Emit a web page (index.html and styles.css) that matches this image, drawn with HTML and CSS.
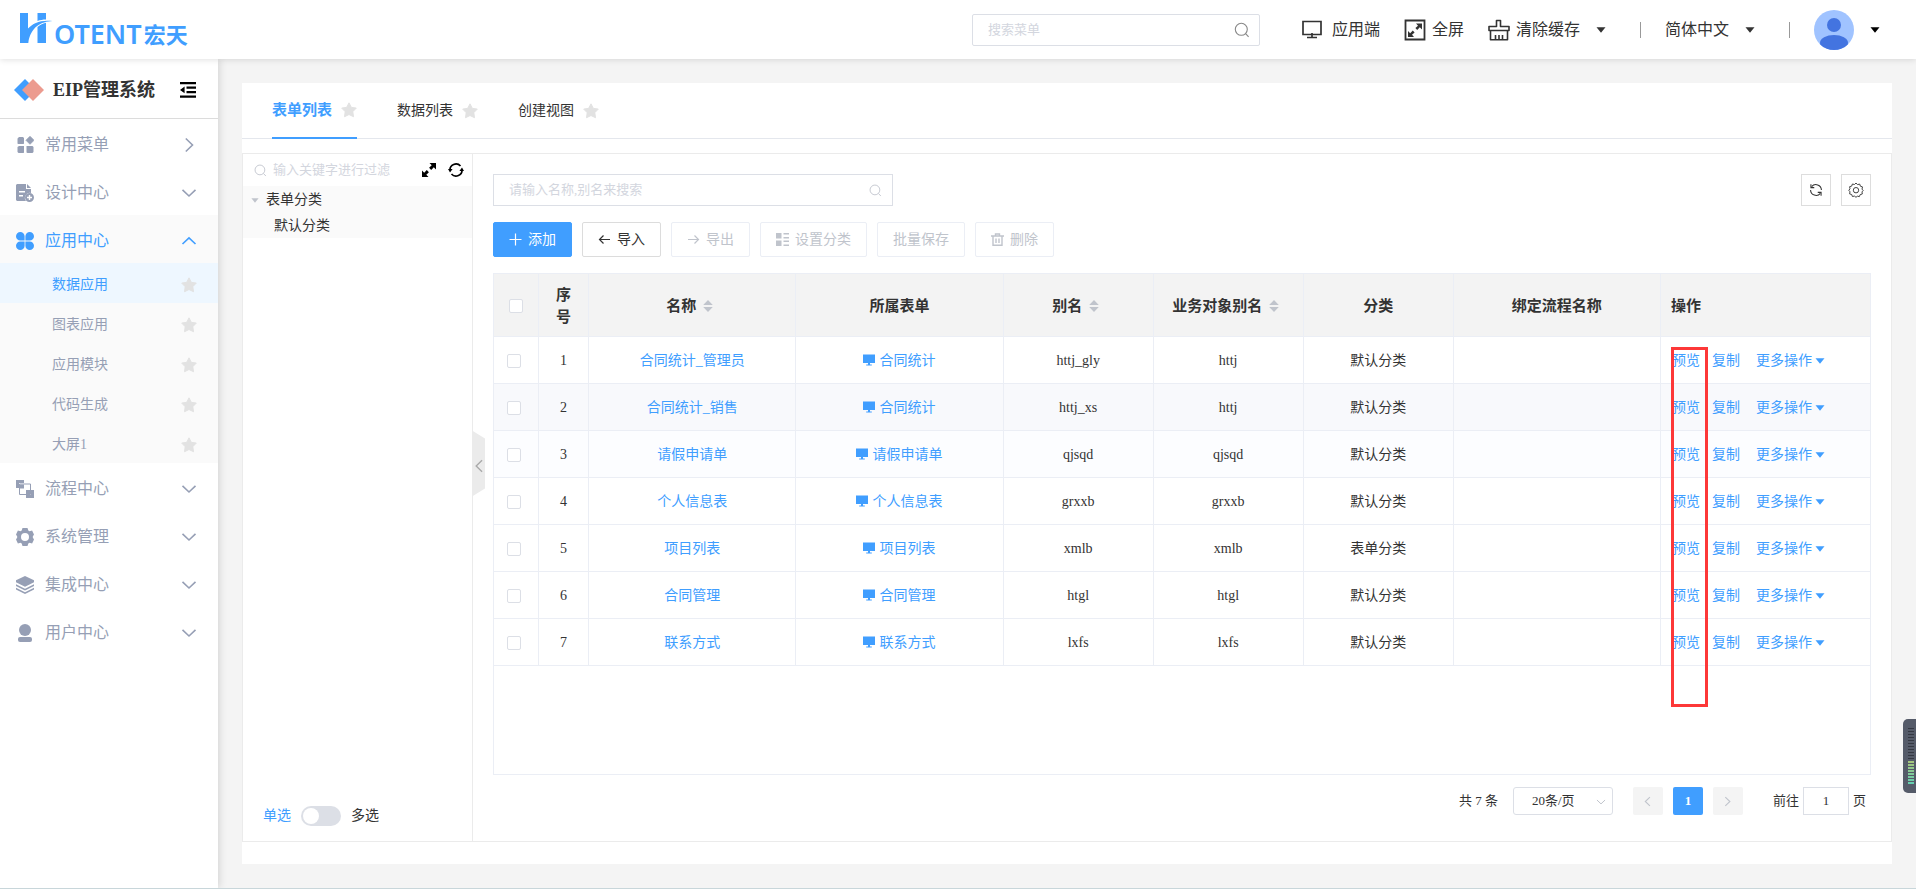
FILE: index.html
```html
<!DOCTYPE html>
<html lang="zh-CN">
<head>
  <meta charset="UTF-8">
  <meta name="viewport" content="width=device-width, initial-scale=1.0">
  <title>EIP管理系统</title>
  <link rel="stylesheet" href="styles.css">
</head>
<body>

<!-- icons -->
<svg class="sprite" aria-hidden="true">
  <symbol id="i-search" viewBox="0 0 16 16"><circle cx="7.3" cy="7.3" r="6" fill="none" stroke="currentColor" stroke-width="1.1"/><path d="M11.6 11.6L14.6 14.8" stroke="currentColor" stroke-width="1.1"/></symbol>
  <symbol id="i-star" viewBox="0 0 16 16"><path d="M8 .8l2.3 4.5 5 .8-3.5 3.6.7 5L8 12.5l-4.5 2.2.7-5L.7 6.1l5-.8z" fill="currentColor" stroke="currentColor" stroke-linejoin="round"/></symbol>
  <symbol id="i-down" viewBox="0 0 16 16"><path d="M1.5 4.8L8 11l6.500-6.200" fill="none" stroke="currentColor" stroke-width="1.6"/></symbol>
  <symbol id="i-up" viewBox="0 0 16 16"><path d="M1.500 11L8 4.800l6.500 6.200" fill="none" stroke="currentColor" stroke-width="1.6"/></symbol>
  <symbol id="i-right" viewBox="0 0 16 16"><path d="M4.800 1.500L11.500 8l-6.700 6.500" fill="none" stroke="currentColor" stroke-width="1.6"/></symbol>
  <symbol id="i-left" viewBox="0 0 16 16"><path d="M11.500 1.500L4.800 8l6.700 6.500" fill="none" stroke="currentColor" stroke-width="1.6"/></symbol>
  <symbol id="i-caret" viewBox="0 0 10 6"><path d="M.5.300h9L5 5.800z" fill="currentColor"/></symbol>
  <symbol id="i-screen" viewBox="0 0 12 12"><path d="M0 .5h12v8.500H0zM5 9h2v1.600h1.800v.9H3.200v-.9H5z" fill="currentColor"/></symbol>
  <symbol id="i-sort" viewBox="0 0 10 14"><path d="M5 1l4.800 5H.2zM5 13l4.800-5H.2z" fill="#c0c4cc"/></symbol>
  <symbol id="i-refresh" viewBox="0 0 16 16"><path d="M3 4.200A6.300 6.300 0 0 1 14.200 8M13 11.800A6.300 6.300 0 0 1 1.800 8" fill="none" stroke="currentColor" stroke-width="1.200"/><path d="M2.200 1.500v3.800H6M13.800 14.500v-3.800H10" fill="none" stroke="currentColor" stroke-width="1.200"/></symbol>
</svg>

<header class="header">
  <a class="logo" href="#" aria-label="HOTENT宏天">
    <svg class="logo-mark" viewBox="0 0 34 31"><path d="M0 0h8v15.500C13 10 21 6.500 32.500 8 21 8.500 10.500 14 8.300 30H0zM17.500 0H26v6.500c-3 0-6 .5-8.500 1.500zM17.500 14c2-1.800 5-3.500 8.500-4.200V30h-8.500z" fill="#409eff"/></svg>
    <span class="logo-en">OTENT</span><span class="logo-cn">宏天</span>
  </a>
  <div class="top-search">
    <input type="text" placeholder="搜索菜单" aria-label="搜索菜单">
    <svg width="16" height="16"><use href="#i-search"/></svg>
  </div>
  <nav class="top-nav">
    <button class="top-btn app-btn">
      <svg width="20" height="20" viewBox="0 0 20 20"><path d="M1 1.500h18v13H1zM10 13v4M5 17.500h10" fill="none" stroke="#333" stroke-width="1.700"/></svg>
      应用端
    </button>
    <button class="top-btn">
      <svg width="22" height="22" viewBox="0 0 22 22"><path d="M1.500 1.500h19v19h-19z" fill="none" stroke="#333" stroke-width="1.800"/><path d="M12 4.500h6v6l-2.200-2.200-2.600 2.600-1.800-1.800L14 6.700zM10 18H4v-6l2.200 2.200 2.600-2.600 1.800 1.800L8 15.800z" fill="#333"/></svg>
      全屏
    </button>
    <button class="top-btn clear-btn">
      <svg width="22" height="22" viewBox="0 0 22 22"><path d="M1 11.500V7.500h7.500V1.500h4v6H21v4zM2.500 11.500v9.300h17v-9.300M7.500 20.500V16M11 20.500V16M14.500 20.500V16" fill="none" stroke="#333" stroke-width="1.600" stroke-linejoin="round"/></svg>
      清除缓存
      <svg class="caret" width="10" height="6"><use href="#i-caret"/></svg>
    </button>
    <i class="divider"></i>
    <button class="top-btn">
      简体中文
      <svg class="caret" width="10" height="6"><use href="#i-caret"/></svg>
    </button>
    <i class="divider"></i>
    <button class="top-btn user-btn" aria-label="用户">
      <svg width="40" height="40" viewBox="0 0 40 40"><clipPath id="av"><circle cx="20" cy="20" r="20"/></clipPath><g clip-path="url(#av)"><path d="M0 0h40v40H0z" fill="#a0c3ff"/><circle cx="20" cy="15" r="7" fill="#4374e0"/><ellipse cx="20" cy="33" rx="14" ry="8" fill="#4374e0"/></g></svg>
      <svg class="caret" width="10" height="6"><use href="#i-caret"/></svg>
    </button>
  </nav>
</header>

<div class="layout">
  <aside class="sidebar">
    <div class="system">
      <svg width="30" height="22" viewBox="0 0 30 22"><path d="M11 0l11 11-11 11L0 11z" fill="#409eff"/><path d="M19 0l11 11-11 11L8 11z" fill="#ec9b8f"/></svg>
      <strong>EIP管理系统</strong>
      <button class="fold" aria-label="收起菜单">
        <svg width="16" height="16" viewBox="0 0 16 16"><path d="M0 0h16v2.300H0zM6.500 4.500H16v2.300H6.500zM6.500 9H16v2.300H6.500zM0 13.500h16v2.300H0zM0 7.900l4.600-3.400v6.800z"/></svg>
      </button>
    </div>
    <ul class="menu">
      <li><a href="#">
        <svg class="ico" viewBox="0 0 18 18"><path d="M3 1h4l1 1v5.500l-.5.500H2l-.500-.5V2.500zM3 10h5v6.500l-.5.500H2.500l-1-1v-5zM10.500 10h6l1 1v5l-1 1h-5l-1-.5z"/><path d="M14 .3l4 4-4 4-4-4z" stroke="#969fb5" stroke-linejoin="round" stroke-width=".8"/></svg>
        <span>常用菜单</span><svg class="arrow"><use href="#i-right"/></svg></a></li>
      <li><a href="#">
        <svg class="ico" viewBox="0 0 18 18"><path fill-rule="evenodd" d="M1 0h9v5h5v4a5 5 0 0 0-5 8H1l-1-1V1zM3 7v1.500h6V7zm0 4v1.500h4V11zM11 0l4 4h-4z"/><path fill-rule="evenodd" d="M13.500 9a4.500 4.500 0 1 1 0 9 4.500 4.500 0 0 1 0-9zm-.7 2v1.800H11v1.400h1.800V16h1.400v-1.800H16v-1.400h-1.800V11z"/></svg>
        <span>设计中心</span><svg class="arrow"><use href="#i-down"/></svg></a></li>
      <li class="open"><a href="#">
        <svg class="ico" viewBox="0 0 18 18"><path d="M4.300 0a4.300 4.300 0 0 1 4.300 4.300v4.300H4.300a4.300 4.300 0 0 1 0-8.600zM13.700 0a4.300 4.300 0 0 1 0 8.600H9.400V4.300A4.300 4.300 0 0 1 13.700 0zM4.300 9.400h4.300v4.300a4.300 4.300 0 1 1-4.300-4.300zM9.400 9.400h4.300a4.300 4.300 0 1 1-4.300 4.300z"/></svg>
        <span>应用中心</span><svg class="arrow"><use href="#i-up"/></svg></a>
        <ul class="submenu">
          <li class="active"><a href="#">数据应用<svg class="star"><use href="#i-star"/></svg></a></li>
          <li><a href="#">图表应用<svg class="star"><use href="#i-star"/></svg></a></li>
          <li><a href="#">应用模块<svg class="star"><use href="#i-star"/></svg></a></li>
          <li><a href="#">代码生成<svg class="star"><use href="#i-star"/></svg></a></li>
          <li><a href="#">大屏1<svg class="star"><use href="#i-star"/></svg></a></li>
        </ul>
      </li>
      <li><a href="#">
        <svg class="ico" viewBox="0 0 18 18"><path d="M0 0h8v3H3v5H0zM4 4.500h4v4H4zM10 10h4v4h-4zM15 10h3v8h-8v-3h5z"/><path d="M3.500 4h11v10.500h-11z" fill="none" stroke="#969fb5"/></svg>
        <span>流程中心</span><svg class="arrow"><use href="#i-down"/></svg></a></li>
      <li><a href="#">
        <svg class="ico" viewBox="0 0 18 18"><path fill-rule="evenodd" d="M6.500 0h5l.8 2.500 1.200.7 2.600-.6L18 6.500l-1.200 2v1l1.200 2-1.900 3.900-2.600-.6-1.200.7-.8 2.500h-5l-.8-2.500-1.200-.7-2.600.6L0 11.500l1.200-2v-1L0 6.500l1.900-3.900 2.600.6 1.200-.7zM9 5a4 4 0 1 0 0 8 4 4 0 0 0 0-8z"/></svg>
        <span>系统管理</span><svg class="arrow"><use href="#i-down"/></svg></a></li>
      <li><a href="#">
        <svg class="ico" viewBox="0 0 18 18"><path d="M9 0l9 4.300v2L9 10.800 0 6.300v-2zM0 8.300l9 4.500 9-4.500v1.700l-9 4.500L0 10zM0 11.700l9 4.500 9-4.500v1.700L9 18l-9-4.600z"/></svg>
        <span>集成中心</span><svg class="arrow"><use href="#i-down"/></svg></a></li>
      <li><a href="#">
        <svg class="ico" viewBox="0 0 18 18"><circle cx="9" cy="6" r="6"/><rect x="2" y="13" width="14" height="5" rx="2"/></svg>
        <span>用户中心</span><svg class="arrow"><use href="#i-down"/></svg></a></li>
    </ul>
  </aside>

  <main class="main">
    <div class="card">
      <nav class="tabs">
        <a class="tab current" href="#">表单列表<svg class="star"><use href="#i-star"/></svg></a>
        <a class="tab" href="#">数据列表<svg class="star"><use href="#i-star"/></svg></a>
        <a class="tab" href="#">创建视图<svg class="star"><use href="#i-star"/></svg></a>
      </nav>

      <div class="content">
        <section class="tree">
          <div class="tree-search">
            <svg class="muted" width="13" height="13"><use href="#i-search"/></svg>
            <input type="text" placeholder="输入关键字进行过滤" aria-label="输入关键字进行过滤">
            <button aria-label="展开"><svg width="14" height="14" viewBox="0 0 14 14"><path d="M7.500 0H14v6.500l-2.200-2.200-2.600 2.600-2.100-2.100 2.600-2.600zM6.500 14H0V7.500l2.200 2.200 2.600-2.600 2.100 2.100-2.600 2.600z"/></svg></button>
            <button aria-label="刷新"><svg width="16" height="16" viewBox="0 0 16 16"><path d="M2 8.500A6 6 0 0 1 12.500 4M14 7.500A6 6 0 0 1 3.500 12" fill="none" stroke="#000" stroke-width="1.700"/><path d="M0 7h4.600L2 10.400zM16 9h-4.600L14 5.600z"/></svg></button>
          </div>
          <ul class="nodes">
            <li><svg class="caret" width="8" height="5"><use href="#i-caret"/></svg>表单分类</li>
            <li class="child">默认分类</li>
          </ul>
          <div class="mode">
            <label class="on" for="mode">单选</label>
            <input type="checkbox" id="mode" class="switch">
            <label for="mode">多选</label>
          </div>
          <button class="handle" aria-label="收起"><svg width="14" height="14"><use href="#i-left"/></svg></button>
        </section>

        <section class="list">
          <div class="list-top">
            <div class="query">
              <input type="text" placeholder="请输入名称,别名来搜索" aria-label="请输入名称,别名来搜索">
              <svg class="muted" width="13" height="13"><use href="#i-search"/></svg>
            </div>
            <div class="tools">
              <button aria-label="刷新"><svg width="14" height="14"><use href="#i-refresh"/></svg></button>
              <button aria-label="设置"><svg width="16" height="16" viewBox="0 0 16 16"><path d="M8 1l1.500 1.600 2.200-.5.700 2.100 2.100.7-.5 2.200L15.200 8.500 14 9.900l.3 2.100-2.100.6-.8 2-2.100-.4L8 15.300l-1.500-1.200-2.100.4-.7-2-2.100-.6.400-2.100L.8 8.300 2 6.800l-.4-2.100 2.100-.6.700-2.100 2.100.5z" fill="none" stroke="#444"/><circle cx="8" cy="8.200" r="2.700" fill="none" stroke="#444"/></svg></button>
            </div>
          </div>

          <div class="actions">
            <button class="btn primary"><svg width="13" height="13" viewBox="0 0 13 13"><path d="M6.500.500v12M.5 6.500h12" stroke="#fff" stroke-width="1.200"/></svg>添加</button>
            <button class="btn"><svg width="13" height="13" viewBox="0 0 13 13"><path d="M12 6.500H1.500M5.500 2.500l-4 4 4 4" fill="none" stroke="#333" stroke-width="1.200"/></svg>导入</button>
            <button class="btn" disabled><svg width="13" height="13" viewBox="0 0 13 13"><path d="M1 6.500h10.500M7.500 2.500l4 4-4 4" fill="none" stroke="#c0c4cc" stroke-width="1.200"/></svg>导出</button>
            <button class="btn" disabled><svg width="13" height="13" viewBox="0 0 13 13"><path d="M0 0h5.500v5.500H0zM0 7.500h5.500V13H0zM7.500 0H13v1.500H7.500zM7.500 4H13v1.500H7.500zM7.500 7.500H13V9H7.500zM7.500 11.500H13V13H7.500z" fill="#c0c4cc"/></svg>设置分类</button>
            <button class="btn" disabled>批量保存</button>
            <button class="btn" disabled><svg width="13" height="13" viewBox="0 0 13 13"><path d="M0 3h13M4.500 2.500V1h4v1.500M2 3v9.300h9V3M5 5.500v4.500M8 5.500v4.500" fill="none" stroke="#c0c4cc" stroke-width="1.400"/></svg>删除</button>
          </div>

          <div class="table-box">
            <table>
              <colgroup>
                <col class="c-check"><col class="c-index"><col><col><col class="c-mid"><col class="c-mid"><col class="c-mid"><col><col class="c-ops">
              </colgroup>
              <thead>
                <tr>
                  <th class="check-all"><input type="checkbox" aria-label="全选"></th>
                  <th>序号</th>
                  <th>名称<svg class="sort"><use href="#i-sort"/></svg></th>
                  <th>所属表单</th>
                  <th>别名<svg class="sort"><use href="#i-sort"/></svg></th>
                  <th>业务对象别名<svg class="sort"><use href="#i-sort"/></svg></th>
                  <th>分类</th>
                  <th>绑定流程名称</th>
                  <th class="ops">操作</th>
                </tr>
              </thead>
              <tbody>
                <tr>
                  <td><input type="checkbox" aria-label="选择1"></td><td>1</td>
                  <td><a href="#">合同统计_管理员</a></td>
                  <td><a href="#"><svg class="screen"><use href="#i-screen"/></svg>合同统计</a></td>
                  <td>httj_gly</td><td>httj</td><td>默认分类</td><td></td>
                  <td class="ops"><a href="#">预览</a><a href="#">复制</a><a class="more" href="#">更多操作<svg><use href="#i-caret"/></svg></a></td>
                </tr>
                <tr class="striped">
                  <td><input type="checkbox" aria-label="选择2"></td><td>2</td>
                  <td><a href="#">合同统计_销售</a></td>
                  <td><a href="#"><svg class="screen"><use href="#i-screen"/></svg>合同统计</a></td>
                  <td>httj_xs</td><td>httj</td><td>默认分类</td><td></td>
                  <td class="ops"><a href="#">预览</a><a href="#">复制</a><a class="more" href="#">更多操作<svg><use href="#i-caret"/></svg></a></td>
                </tr>
                <tr class="tinted">
                  <td><input type="checkbox" aria-label="选择3"></td><td>3</td>
                  <td><a href="#">请假申请单</a></td>
                  <td><a href="#"><svg class="screen"><use href="#i-screen"/></svg>请假申请单</a></td>
                  <td>qjsqd</td><td>qjsqd</td><td>默认分类</td><td></td>
                  <td class="ops"><a href="#">预览</a><a href="#">复制</a><a class="more" href="#">更多操作<svg><use href="#i-caret"/></svg></a></td>
                </tr>
                <tr>
                  <td><input type="checkbox" aria-label="选择4"></td><td>4</td>
                  <td><a href="#">个人信息表</a></td>
                  <td><a href="#"><svg class="screen"><use href="#i-screen"/></svg>个人信息表</a></td>
                  <td>grxxb</td><td>grxxb</td><td>默认分类</td><td></td>
                  <td class="ops"><a href="#">预览</a><a href="#">复制</a><a class="more" href="#">更多操作<svg><use href="#i-caret"/></svg></a></td>
                </tr>
                <tr>
                  <td><input type="checkbox" aria-label="选择5"></td><td>5</td>
                  <td><a href="#">项目列表</a></td>
                  <td><a href="#"><svg class="screen"><use href="#i-screen"/></svg>项目列表</a></td>
                  <td>xmlb</td><td>xmlb</td><td>表单分类</td><td></td>
                  <td class="ops"><a href="#">预览</a><a href="#">复制</a><a class="more" href="#">更多操作<svg><use href="#i-caret"/></svg></a></td>
                </tr>
                <tr>
                  <td><input type="checkbox" aria-label="选择6"></td><td>6</td>
                  <td><a href="#">合同管理</a></td>
                  <td><a href="#"><svg class="screen"><use href="#i-screen"/></svg>合同管理</a></td>
                  <td>htgl</td><td>htgl</td><td>默认分类</td><td></td>
                  <td class="ops"><a href="#">预览</a><a href="#">复制</a><a class="more" href="#">更多操作<svg><use href="#i-caret"/></svg></a></td>
                </tr>
                <tr>
                  <td><input type="checkbox" aria-label="选择7"></td><td>7</td>
                  <td><a href="#">联系方式</a></td>
                  <td><a href="#"><svg class="screen"><use href="#i-screen"/></svg>联系方式</a></td>
                  <td>lxfs</td><td>lxfs</td><td>默认分类</td><td></td>
                  <td class="ops"><a href="#">预览</a><a href="#">复制</a><a class="more" href="#">更多操作<svg><use href="#i-caret"/></svg></a></td>
                </tr>
              </tbody>
            </table>
            <div class="mark"></div>
          </div>

          <div class="pager">
            <span>共 7 条</span>
            <div class="size">
              <select aria-label="每页条数"><option>20条/页</option></select>
              <svg class="muted" width="10" height="10"><use href="#i-down"/></svg>
            </div>
            <button disabled aria-label="上一页"><svg width="11" height="11"><use href="#i-left"/></svg></button>
            <button class="now">1</button>
            <button disabled aria-label="下一页"><svg width="11" height="11"><use href="#i-right"/></svg></button>
            <label class="jump">前往<input type="text" value="1">页</label>
          </div>
        </section>
      </div>
    </div>
  </main>
</div>

<!-- floating level meter -->
<div class="meter"><i class="off"></i><i class="lit"></i></div>

</body>
</html>
```
FILE: styles.css
```css
* {
  box-sizing: border-box;
}

body {
  margin: 0;
  min-height: 100vh;
  display: flex;
  flex-direction: column;
  font-family: "Liberation Serif", "Noto Sans CJK SC", serif;
  font-size: 14px;
  line-height: 20px;
  color: #333;
  background-color: #f4f4f4;
  border-bottom: 1px solid #c8d6da;
}

ul {
  list-style: none;
  margin: 0;
  padding: 0;
}

a {
  color: inherit;
  text-decoration: none;
}

button, input, select {
  font: inherit;
  color: inherit;
}

button {
  padding: 0;
  border: none;
  background: none;
  cursor: pointer;
}

svg {
  flex: none;
}

input::placeholder {
  color: #d3d6de;
  opacity: 1;
}

.sprite {
  position: absolute;
  width: 0;
  height: 0;
}

.muted {
  color: #c0c4cc;
}

/* header */
.header {
  position: relative;
  z-index: 2;
  height: 59px;
  padding: 0 36px 0 20px;
  display: flex;
  align-items: center;
  background-color: #fff;
  box-shadow: 0 1px 6px rgba(0, 0, 0, 0.12);
}

.logo {
  display: flex;
  align-items: center;
  color: #409eff;
  font-family: "Noto Sans", "Noto Sans CJK SC", sans-serif;
  font-weight: 600;
}

.logo-mark {
  width: 34px;
  height: 31px;
  margin-bottom: 2px;
}

.logo-en {
  font-size: 27px;
  line-height: 30px;
  padding-top: 8px;
}

.logo-cn {
  font-size: 22px;
  line-height: 30px;
  padding: 8px 0 0 2px;
  font-weight: 700;
}

.top-search {
  width: 288px;
  height: 32px;
  margin-left: auto;
  margin-right: 42px;
  padding: 0 9px 0 15px;
  display: flex;
  align-items: center;
  border: 1px solid #dcdfe6;
  border-radius: 2px;
  color: #888;
}

.top-search input {
  flex: 1;
  min-width: 0;
  border: none;
  padding: 0;
  outline: none;
  font-size: 13px;
}

.top-nav {
  display: flex;
  align-items: center;
  gap: 24px;
}

.top-btn {
  display: flex;
  align-items: center;
  gap: 6px;
  font-size: 16px;
}

.app-btn {
  gap: 10px;
}

.top-btn .caret {
  margin-left: 10px;
}

.user-btn {
  color: #000;
}

.divider {
  width: 1px;
  height: 16px;
  margin-left: 10px;
  background-color: #999;
}

/* sidebar */
.layout {
  flex: 1;
  display: flex;
}

.sidebar {
  position: relative;
  z-index: 1;
  width: 218px;
  flex: none;
  background-color: #fff;
  box-shadow: 1px 0 8px rgba(0, 0, 0, 0.15);
}

.system {
  height: 60px;
  padding: 2px 22px 0 14px;
  display: flex;
  align-items: center;
  border-bottom: 1px solid #dcdcdc;
}

.system strong {
  margin-left: 9px;
  font-size: 18px;
}

.fold {
  height: 16px;
  margin-left: auto;
}

.menu {
  color: #969fb5;
  font-size: 16px;
}

.menu a {
  height: 48px;
  padding: 3px 21px 0 16px;
  display: flex;
  align-items: center;
}

.ico {
  width: 18px;
  height: 18px;
  margin-right: 11px;
  fill: currentColor;
}

.arrow {
  width: 16px;
  height: 16px;
  margin-left: auto;
}

.open {
  background-color: #fafafa;
}

.open > a {
  color: #409eff;
}

.submenu {
  font-size: 14px;
}

.submenu a {
  height: 40px;
  padding-left: 52px;
}

.submenu .active {
  color: #409eff;
  background-color: #eef7ff;
}

.star {
  width: 16px;
  height: 16px;
  color: #e2e2e2;
}

.submenu .star {
  margin-left: auto;
}

/* main card */
.main {
  flex: 1;
  min-width: 0;
  padding: 24px;
  display: flex;
}

.card {
  flex: 1;
  min-width: 0;
  padding-bottom: 22px;
  display: flex;
  flex-direction: column;
  background-color: #fff;
}

.tabs {
  height: 56px;
  padding: 0 30px;
  display: flex;
  gap: 40px;
  border-bottom: 1px solid #e4e7ed;
}

.tab {
  height: 56px;
  display: flex;
  align-items: center;
  gap: 9px;
}

.tab.current {
  color: #409eff;
  font-size: 15px;
  font-weight: bold;
  border-bottom: 2px solid #409eff;
}

.content {
  flex: 1;
  margin-top: 14px;
  display: flex;
  border: 1px solid #ebebeb;
}

/* category tree */
.tree {
  position: relative;
  width: 230px;
  flex: none;
  display: flex;
  flex-direction: column;
  border-right: 1px solid #ebebeb;
}

.tree-search {
  height: 32px;
  padding: 0 8px 0 11px;
  display: flex;
  align-items: center;
}

.tree-search input {
  flex: 1;
  min-width: 0;
  margin-left: 6px;
  border: none;
  padding: 0;
  outline: none;
  font-size: 13px;
}

.tree-search button {
  height: 16px;
  margin-left: 12px;
  display: flex;
  align-items: center;
}

.nodes {
  background-color: #fafafa;
}

.nodes li {
  height: 26px;
  padding: 2px 0 0 8px;
  display: flex;
  align-items: center;
}

.nodes .caret {
  margin-right: 7px;
  color: #c0c4cc;
}

.nodes .child {
  padding-left: 31px;
}

.mode {
  margin-top: auto;
  padding: 0 20px 15px;
  display: flex;
  align-items: center;
  gap: 10px;
}

.mode .on {
  color: #409eff;
}

.switch {
  appearance: none;
  width: 40px;
  height: 20px;
  margin: 0;
  padding: 2px;
  border-radius: 10px;
  background-color: #dcdfe6;
}

.switch::before {
  content: "";
  display: block;
  width: 16px;
  height: 16px;
  border-radius: 50%;
  background-color: #fff;
}

.switch:checked {
  background-color: #409eff;
}

.handle {
  position: absolute;
  left: 100%;
  top: 50%;
  width: 13px;
  height: 66px;
  margin-top: -67px;
  padding-top: 4px;
  display: flex;
  align-items: center;
  justify-content: center;
  color: #aaa;
  background-color: #ebebeb;
  clip-path: polygon(0 0, 100% 12%, 100% 88%, 0 100%);
}

/* list */
.list {
  flex: 1;
  min-width: 0;
  padding: 20px 20px 26px;
  display: flex;
  flex-direction: column;
}

.list-top {
  display: flex;
  justify-content: space-between;
}

.query {
  width: 400px;
  height: 32px;
  padding: 0 10px 0 15px;
  display: flex;
  align-items: center;
  border: 1px solid #dcdfe6;
}

.query input {
  flex: 1;
  min-width: 0;
  border: none;
  padding: 0;
  outline: none;
  font-size: 13px;
}

.tools {
  display: flex;
  gap: 10px;
}

.tools button {
  width: 30px;
  height: 32px;
  display: flex;
  align-items: center;
  justify-content: center;
  border: 1px solid #ddd;
}

.actions {
  margin: 16px 0;
  display: flex;
  gap: 10px;
}

.btn {
  height: 35px;
  padding: 0 15px;
  display: flex;
  align-items: center;
  gap: 6px;
  border: 1px solid #dcdcdc;
  border-radius: 2px;
}

.btn.primary {
  color: #fff;
  background-color: #409eff;
  border-color: #409eff;
}

.btn:disabled {
  color: #c0c4cc;
  border-color: #ebeef5;
  cursor: not-allowed;
}

.table-box {
  position: relative;
  flex: 1;
  border: 1px solid #ebeef5;
}

table {
  width: 100%;
  table-layout: fixed;
  border-collapse: separate;
  border-spacing: 0;
}

.c-check {
  width: 45px;
}

.c-index {
  width: 50px;
}

.c-mid {
  width: 150px;
}

.c-ops {
  width: 209px;
}

th, td {
  height: 47px;
  padding: 1px 10px 0;
  text-align: center;
  border-right: 1px solid #ebeef5;
  border-bottom: 1px solid #ebeef5;
}

th:last-child, td:last-child {
  border-right: none;
}

th {
  height: 63px;
  font-size: 15px;
  line-height: 22px;
  background-color: #f3f3f3;
}

td a {
  color: #409eff;
}

.striped {
  background-color: #f8f9fc;
}

.tinted {
  background-color: #fcfdff;
}

td input, th input {
  appearance: none;
  display: block;
  width: 14px;
  height: 14px;
  margin: 0 0 0 3px;
  border: 1px solid #dcdfe6;
  border-radius: 2px;
  background-color: #fff;
}

.check-all input {
  margin-left: 5px;
}

.sort {
  width: 10px;
  height: 14px;
  margin: 0 5px 0 7px;
  vertical-align: -2px;
}

.screen {
  width: 12px;
  height: 12px;
  margin-right: 4px;
  vertical-align: -1px;
}

.ops {
  padding-left: 11px;
  text-align: left;
}

th.ops {
  padding-left: 10px;
}

.ops a {
  margin-right: 12px;
}

.ops .more {
  margin: 0 0 0 4px;
}

.ops svg {
  width: 10px;
  height: 6px;
  margin-left: 3px;
  vertical-align: 1px;
}

/* highlights the preview column */
.mark {
  position: absolute;
  right: 162px;
  top: 73px;
  width: 37px;
  height: 360px;
  border: 3px solid #fd3838;
  pointer-events: none;
}

/* pagination */
.pager {
  margin-top: 12px;
  padding-right: 5px;
  display: flex;
  align-items: center;
  justify-content: flex-end;
  gap: 10px;
  font-size: 13px;
}

.size {
  position: relative;
  margin: 0 10px 0 5px;
}

.size select {
  appearance: none;
  display: block;
  width: 100px;
  height: 28px;
  padding: 0 18px;
  border: 1px solid #dcdfe6;
  border-radius: 3px;
  background-color: #fff;
}

.size svg {
  position: absolute;
  right: 7px;
  top: 10px;
}

.pager button {
  width: 30px;
  height: 28px;
  display: flex;
  align-items: center;
  justify-content: center;
  border-radius: 2px;
  color: #c0c4cc;
  background-color: #f4f4f4;
}

.pager .now {
  color: #fff;
  font-weight: bold;
  background-color: #409eff;
}

.jump {
  margin-left: 20px;
  display: flex;
  align-items: center;
  gap: 4px;
}

.jump input {
  width: 46px;
  height: 28px;
  border: 1px solid #dcdfe6;
  text-align: center;
}

/* level meter */
.meter {
  position: fixed;
  right: 0;
  bottom: 96px;
  z-index: 3;
  width: 13px;
  height: 74px;
  padding: 9px 2px 8px 5px;
  display: flex;
  flex-direction: column;
  border-radius: 5px 0 0 5px;
  background-color: #555b69;
}

.meter i {
  background: repeating-linear-gradient(#343842 0 1px, #555b69 1px 3px);
}

.meter .off {
  flex: 4;
}

.meter .lit {
  flex: 3;
  background: repeating-linear-gradient(transparent 0 2px, #555b69 2px 3px), linear-gradient(#a9c67c, #5fcfb4);
}
```
